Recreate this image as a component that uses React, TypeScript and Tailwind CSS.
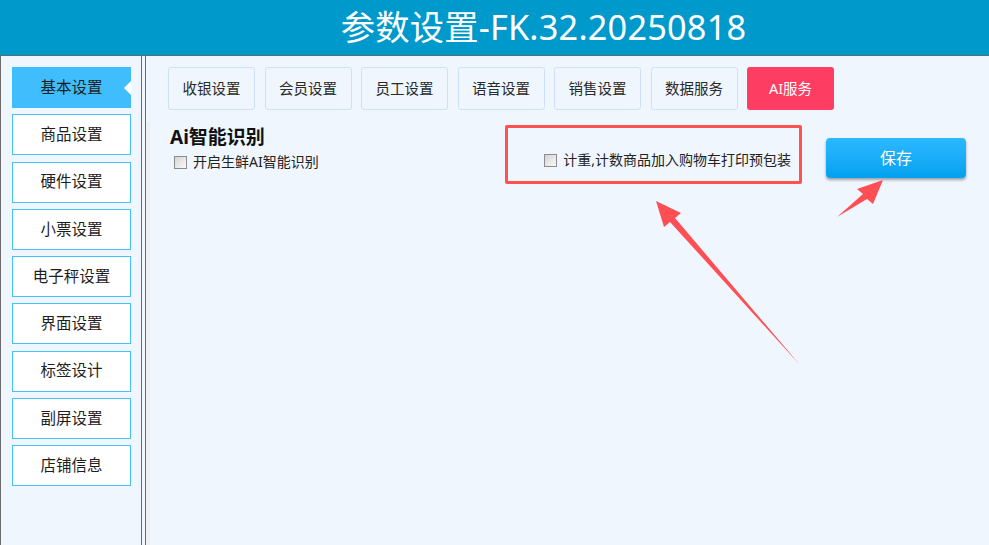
import React from 'react';

const menu = ['基本设置', '商品设置', '硬件设置', '小票设置', '电子秤设置', '界面设置', '标签设计', '副屏设置', '店铺信息'];
const tabs = ['收银设置', '会员设置', '员工设置', '语音设置', '销售设置', '数据服务'];

const font = { fontFamily: '"Noto Sans", "Noto Sans CJK SC", sans-serif' };

const CheckBox: React.FC = () => (
  <span className="inline-block w-[13px] h-[13px] border border-[#8c8c8c] bg-gradient-to-br from-[#d4d4d4] to-[#fafafa] shrink-0" />
);

// annotation arrows drawn over the page
const Arrows: React.FC = () => (
  <svg className="absolute left-0 top-0 pointer-events-none" width={989} height={545}>
    <polygon points="656,201 681,213 675,218 800,365 670,222 664,227" fill="#ff4f55" />
    <polygon points="883,180 857,189 863,194 837,217 867,199 873,204" fill="#ff4f55" />
  </svg>
);

const App: React.FC = () => {
  return (
    <div className="relative w-[989px] h-[545px] flex flex-col overflow-hidden bg-[#eff6fe]" style={font}>
      {/* Header */}
      <div className="h-[56px] shrink-0 bg-[#0099cb] border-b border-[#5f6a70] flex items-center justify-center">
        <span className="text-white text-[34.3px] leading-none pl-[98px] tracking-[0.2px]">参数设置-FK.32.20250818</span>
      </div>

      <div className="flex flex-1 min-h-0">
        {/* Sidebar */}
        <div className="w-[142px] shrink-0 border-l border-r border-[#6b6b6b] pt-[11px] pl-[11px] flex flex-col gap-[6.25px]">
          {menu.map((m, i) => (
            <div
              key={m}
              className={`relative w-[119px] h-[41px] flex items-center justify-center text-[15.5px] text-[#1e1e1e] ${
                i === 0 ? 'bg-[#3fbdfd]' : 'bg-white border border-[#45c2fb]'
              }`}
            >
              {m}
              {i === 0 && (
                <span className="absolute right-0 top-[14px] w-0 h-0 border-y-[7px] border-y-transparent border-r-[7px] border-r-white" />
              )}
            </div>
          ))}
        </div>
        <div className="w-[3px] shrink-0" />
        <div className="w-px shrink-0 bg-[#6b6b6b]" />

        {/* Content */}
        <div className="flex-1 flex flex-col">
          <div className="flex gap-[9.5px] pl-[22px] pt-[11px] h-[66px]">
            {tabs.map((t) => (
              <div
                key={t}
                className="w-[87px] h-[43px] border border-[#cde1f8] rounded-[3px] flex items-center justify-center text-[14.5px] text-[#2a2a2a]"
              >
                {t}
              </div>
            ))}
            <div className="w-[87px] h-[43px] rounded-[3px] bg-[#fe3d63] flex items-center justify-center text-[14.5px] text-white">
              AI服务
            </div>
          </div>

          <div className="flex-1 border-l-[4px] border-[#efefef] flex pl-[20px] pt-[3px]">
            <div className="w-[335px] shrink-0">
              <div className="text-[19px] font-bold text-[#111] leading-[24px]">Ai智能识别</div>
              <div className="flex items-center gap-[6px] pl-[4px] mt-[4px] text-[14px] leading-[18px] text-[#222]">
                <CheckBox />
                <span>开启生鲜AI智能识别</span>
              </div>
            </div>
            <div className="w-[297px] h-[59px] shrink-0 border-[3px] border-[#ff5151] rounded-[2px] flex justify-end items-start pt-[23px] pr-[8px]">
              <div className="flex items-center gap-[6px] text-[14px] leading-[18px] text-[#222]">
                <CheckBox />
                <span>计重,计数商品加入购物车打印预包装</span>
              </div>
            </div>
            <div className="ml-[24px] mt-[13px] w-[140px] h-[40px] rounded-[4px] bg-gradient-to-b from-[#2bb9ff] to-[#00a1f0] shadow-[0_2px_3px_rgba(0,0,0,0.35)] flex items-center justify-center text-white text-[16px]">
              保存
            </div>
          </div>
        </div>
      </div>

      <Arrows />
    </div>
  );
};

export default App;
